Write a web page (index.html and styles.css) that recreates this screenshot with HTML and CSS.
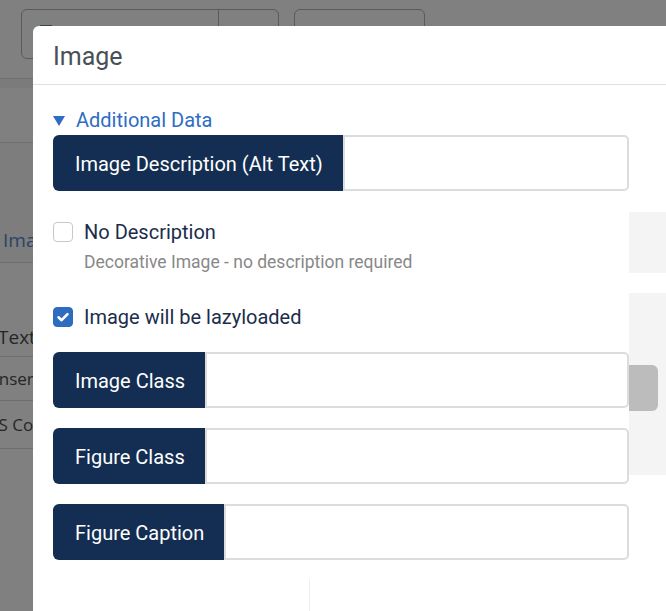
FILE: index.html
```html
<!DOCTYPE html>
<html>
<head>
<meta charset="utf-8">
<link rel="stylesheet" href="styles.css">
</head>
<body>
<div class="page">
  <div class="toolbar">
    <div class="btn-group"><span class="btn-main"><span class="green"></span></span><span class="btn-split"></span></div>
    <div class="btn-single"></div>
  </div>
  <div class="band"></div>
  <div class="strip"></div>
  <div class="tabs"><span class="tab-text">Image</span></div>
  <div class="thead"><span class="th-text">Text</span></div>
  <div class="trow"><span class="td-text">Insert</span></div>
  <div class="trow tall"><span class="td-text">JS Code</span></div>
</div>

<div class="modal">
  <div class="modal-header"><h1 class="modal-title">Image</h1></div>
  <div class="modal-body">
    <div class="form-col">
      <div class="toggle"><span class="caret"></span><span>Additional Data</span></div>
      <div class="group">
        <span class="group-label">Image Description (Alt Text)</span>
        <span class="group-input"></span>
      </div>
      <div class="check-row first">
        <span class="checkbox"></span>
        <span class="check-label">No Description</span>
      </div>
      <div class="hint">Decorative Image - no description required</div>
      <div class="check-row second">
        <span class="checkbox checked"><svg viewBox="0 0 20 20" width="20" height="20"><path d="M5.5 10.3 L8.6 13.2 L14.5 7.2" fill="none" stroke="#fff" stroke-width="2.6" stroke-linecap="round" stroke-linejoin="round"/></svg></span>
        <span class="check-label">Image will be lazyloaded</span>
      </div>
      <div class="group g-first">
        <span class="group-label">Image Class</span>
        <span class="group-input"></span>
      </div>
      <div class="group g-next">
        <span class="group-label">Figure Class</span>
        <span class="group-input"></span>
      </div>
      <div class="group g-next">
        <span class="group-label">Figure Caption</span>
        <span class="group-input"></span>
      </div>
      <div class="footer-rule"></div>
    </div>
    <div class="side-col">
      <div class="side-box small"></div>
      <div class="side-box big"><div class="knob"></div></div>
    </div>
  </div>
</div>
</body>
</html>
```

FILE: styles.css
```css
* { box-sizing: border-box; }
html, body {
  margin: 0;
  padding: 0;
  width: 666px;
  height: 611px;
  overflow: hidden;
  background: #808080;
  font-family: "Open Sans", "Liberation Sans", sans-serif;
}
.page {
  width: 666px;
  height: 611px;
}
.toolbar {
  height: 79px;
  padding: 9px 0 0 21px;
  display: flex;
  gap: 15px;
  border-bottom: 1px solid #6f6f6f;
}
.btn-group {
  display: flex;
  height: 50px;
  border: 1px solid #565b62;
  border-radius: 6px;
}
.btn-main {
  width: 197px;
  border-right: 1px solid #565b62;
  padding: 15px 0 0 18px;
}
.green {
  display: block;
  width: 12px;
  height: 12px;
  background: #2e4f2e;
}
.btn-split { width: 59px; }
.btn-single {
  width: 131px;
  height: 50px;
  border: 1px solid #565b62;
  border-radius: 6px;
}
.band {
  height: 9px;
  background: #7b7b7b;
}
.strip {
  height: 55px;
  border-bottom: 1px solid #6e6e6e;
}
.tabs {
  height: 120px;
  background: #7d7d7d;
  border-bottom: 1px solid #6e6e6e;
  display: flex;
  align-items: flex-end;
  padding: 0 0 9px 3px;
}
.tab-text {
  color: #2a4367;
  font-size: 19px;
}
.thead {
  height: 94px;
  border-bottom: 1px solid #6e6e6e;
  display: flex;
  align-items: flex-end;
  padding-bottom: 6px;
}
.th-text {
  font-size: 19px;
  color: #262626;
  margin-left: -2px;
}
.trow {
  height: 44px;
  border-bottom: 1px solid #6e6e6e;
  display: flex;
  align-items: center;
}
.trow.tall { height: 48px; }
.td-text {
  font-size: 17px;
  color: #262626;
  margin-left: -6px;
}

.modal {
  position: absolute;
  left: 33px;
  top: 26px;
  width: 660px;
  height: 620px;
  background: #fff;
  border-top-left-radius: 6px;
  font-family: Roboto, "Liberation Sans", sans-serif;
}
.modal-header {
  height: 59px;
  border-bottom: 1px solid #dee2e6;
  display: flex;
  align-items: center;
  padding: 2px 20px 0;
}
.modal-title {
  margin: 0;
  font-size: 25px;
  font-weight: 400;
  color: #495057;
}
.modal-body {
  display: flex;
  padding: 24px 0 0 20px;
}
.form-col {
  width: 576px;
}
.toggle {
  display: flex;
  align-items: center;
  height: 22px;
  color: #2d6dc3;
  font-size: 20px;
  line-height: 22px;
}
.caret {
  width: 0;
  height: 0;
  border-left: 6px solid transparent;
  border-right: 6px solid transparent;
  border-top: 10px solid #2d6dc3;
  margin-right: 11px;
  margin-top: 1px;
}
.group {
  display: flex;
  height: 56px;
  margin-top: 4px;
}
.group.g-first { margin-top: 23px; }
.group.g-next { margin-top: 20px; }
.group-label {
  background: #132e52;
  color: #fff;
  font-size: 20px;
  display: flex;
  align-items: center;
  padding: 2px 20px 0 22px;
  border-radius: 6px 0 0 6px;
  white-space: nowrap;
}
.group-input {
  flex: 1;
  border: 2px solid #dcdcdc;
  border-radius: 0 5px 5px 0;
  background: #fff;
}
.check-row {
  display: flex;
  align-items: center;
  height: 24px;
}
.check-row.first { margin-top: 29px; }
.check-row.second { margin-top: 32px; }
.checkbox {
  width: 20px;
  height: 20px;
  border: 1px solid #c8c8c8;
  border-radius: 4px;
  margin-right: 11px;
  display: flex;
  flex: none;
}
.checkbox.checked {
  background: #2e6cc0;
  border-color: #2e6cc0;
}
.checkbox svg { margin: -1px; }
.check-label {
  font-size: 20px;
  color: #1b2d4b;
}
.hint {
  margin-left: 31px;
  font-size: 17.5px;
  line-height: 22px;
  margin-top: 7px;
  color: #888;
}
.footer-rule {
  margin: 19px 0 0 256px;
  height: 40px;
  border-left: 1px solid #eeeeee;
}
.side-col {
  width: 40px;
  padding-top: 103px;
  display: flex;
  flex-direction: column;
  gap: 20px;
}
.side-box {
  background: #f4f4f4;
}
.side-box.small { height: 61px; }
.side-box.big {
  height: 182px;
  padding-top: 72px;
}
.knob {
  width: 29px;
  height: 46px;
  background: #bcbcbc;
  border-radius: 0 6px 6px 0;
}
```
